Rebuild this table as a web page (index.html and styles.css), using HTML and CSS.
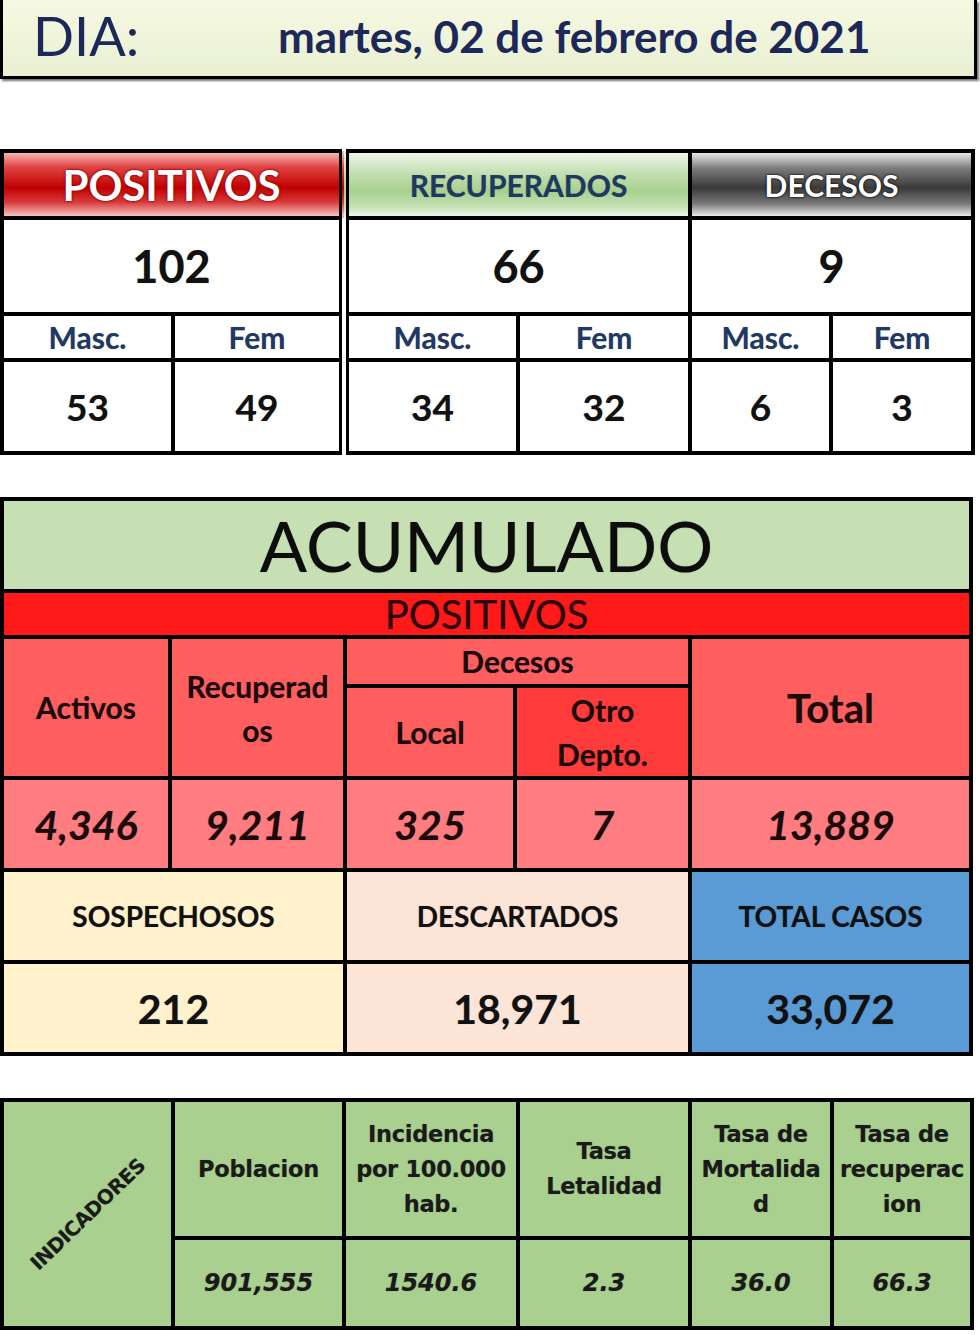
FILE: index.html
```html
<!DOCTYPE html>
<html lang="es">
<head>
<meta charset="utf-8">
<title>Reporte diario COVID-19</title>
<link rel="stylesheet" href="styles.css">
</head>
<body>
<main class="page">
  <header class="day">
    <span class="day-label">DIA:</span>
    <span class="day-date">martes, 02 de febrero de 2021</span>
  </header>

  <table class="daily">
    <colgroup>
      <col class="d1"><col class="d2"><col class="d3"><col class="d4"><col class="d5"><col class="d6">
    </colgroup>
    <tr class="r-head">
      <th colspan="2" class="h-pos sep">POSITIVOS</th>
      <th colspan="2" class="h-rec">RECUPERADOS</th>
      <th colspan="2" class="h-dec">DECESOS</th>
    </tr>
    <tr class="r-big">
      <td colspan="2" class="sep">102</td>
      <td colspan="2">66</td>
      <td colspan="2">9</td>
    </tr>
    <tr class="r-sex">
      <th>Masc.</th><th class="sep">Fem</th>
      <th>Masc.</th><th>Fem</th>
      <th>Masc.</th><th>Fem</th>
    </tr>
    <tr class="r-val">
      <td>53</td><td class="sep">49</td>
      <td>34</td><td>32</td>
      <td>6</td><td>3</td>
    </tr>
  </table>

  <table class="acum">
    <colgroup>
      <col class="a1"><col class="a2"><col class="a3"><col class="a4"><col class="a5">
    </colgroup>
    <tr class="r-title">
      <th colspan="5" class="title">ACUMULADO</th>
    </tr>
    <tr class="r-pos">
      <th colspan="5" class="pos">POSITIVOS</th>
    </tr>
    <tr class="r-h1">
      <th rowspan="2" class="lbl">Activos</th>
      <th rowspan="2" class="lbl two">Recuperad<br>os</th>
      <th colspan="2" class="lbl">Decesos</th>
      <th rowspan="2" class="lbl total">Total</th>
    </tr>
    <tr class="r-h2">
      <th class="lbl">Local</th>
      <th class="lbl otro two">Otro<br>Depto.</th>
    </tr>
    <tr class="r-num">
      <td>4,346</td><td>9,211</td><td>325</td><td>7</td><td>13,889</td>
    </tr>
    <tr class="r-cases">
      <th colspan="2" class="sosp">SOSPECHOSOS</th>
      <th colspan="2" class="desc">DESCARTADOS</th>
      <th class="tot">TOTAL CASOS</th>
    </tr>
    <tr class="r-cnum">
      <td colspan="2" class="sosp">212</td>
      <td colspan="2" class="desc">18,971</td>
      <td class="tot">33,072</td>
    </tr>
  </table>

  <table class="ind">
    <colgroup>
      <col class="i1"><col class="i2"><col class="i3"><col class="i4"><col class="i5"><col class="i6">
    </colgroup>
    <tr class="r-ih">
      <th rowspan="2" class="diag"><span>INDICADORES</span></th>
      <th>Poblacion</th>
      <th>Incidencia<br>por 100.000<br>hab.</th>
      <th>Tasa<br>Letalidad</th>
      <th>Tasa de<br>Mortalida<br>d</th>
      <th>Tasa de<br>recuperac<br>ion</th>
    </tr>
    <tr class="r-iv">
      <td>901,555</td><td>1540.6</td><td>2.3</td><td>36.0</td><td>66.3</td>
    </tr>
  </table>
</main>
</body>
</html>
```

FILE: styles.css
```css
* { box-sizing: border-box; }
html, body { margin: 0; padding: 0; background: #fff; }
body { width: 980px; font-family: Lato, "Open Sans", sans-serif; color: #111; }

.day {
  display: flex;
  align-items: center;
  height: 79px;
  width: 977px;
  border: 3px solid #000;
  border-top: 0;
  background: linear-gradient(#f5f9e2, #e9f0d2);
  box-shadow: 2px 2px 2px rgba(0, 0, 0, .55);
  color: #1c2859;
  padding-bottom: 4px;
}
.day-label { font-size: 54px; margin-left: 30px; width: 245px; line-height: 1; }
.day-date { font-size: 44px; font-weight: 700; line-height: 1; }

table {
  border-collapse: collapse;
  table-layout: fixed;
  width: 973px;
}
th, td {
  border: 4px solid #000;
  padding: 0;
  text-align: center;
  vertical-align: middle;
  font-weight: 700;
  text-shadow: 0 0 1px rgba(0, 0, 0, .35);
}

/* ---------- daily table ---------- */
.daily { margin-top: 70px; background: #fff; }
.daily .d1 { width: 171px; }
.daily .d2 { width: 171px; }
.daily .d3 { width: 174px; }
.daily .d4 { width: 172px; }
.daily .d5 { width: 141px; }
.daily .d6 { width: 142px; }
.daily .sep { border-right: 10px double #000; }
.daily .r-head { height: 67px; }
.daily .r-big { height: 96px; }
.daily .r-sex { height: 46px; }
.daily .r-val { height: 93px; }

.h-pos {
  background: linear-gradient(#f6b5b5 0%, #e04545 22%, #c00000 55%, #d83a3a 78%, #f7c4c4 100%);
  color: #fff;
  font-size: 42px;
}
.daily .h-pos { text-shadow: 0 0 2px #7a0000, 0 0 3px #a00000; }
.h-rec {
  background: linear-gradient(#eef6ea 0%, #c6e0b4 30%, #a9d08e 60%, #c5e0b3 85%, #eef6ea 100%);
  color: #1f3864;
  font-size: 30px;
}
.h-dec {
  background: linear-gradient(#e6e6e6 0%, #7a7a7a 25%, #3a3a3a 55%, #777 80%, #eaeaea 100%);
  color: #fff;
  font-size: 30px;
}
.daily .h-dec { text-shadow: 0 0 2px #000, 0 0 3px #222; }
.r-big td { font-size: 45px; color: #111; }
.r-sex th { font-size: 30px; color: #1f3864; }
.r-val td { font-size: 37px; color: #111; }

/* ---------- accumulated table ---------- */
.acum { margin-top: 42px; }
.acum .a1 { width: 168px; }
.acum .a2 { width: 175px; }
.acum .a3 { width: 170px; }
.acum .a4 { width: 175px; }
.acum .a5 { width: 281px; }
.acum .r-title { height: 92px; }
.acum .r-pos { height: 46px; }
.acum .r-h1 { height: 49px; }
.acum .r-h2 { height: 92px; }
.acum .r-num { height: 92px; }
.acum .r-cases { height: 92px; }
.acum .r-cnum { height: 92px; }

.title {
  background: #c6e0b4;
  font-size: 70px;
  font-weight: 400;
  color: #0d0d0d;
  line-height: 1;
}
.pos {
  background: #ff1a1a;
  font-size: 40px;
  font-weight: 400;
  color: #2b0808;
  line-height: 1;
}
.lbl {
  background: #ff5f5f;
  font-size: 30px;
  color: #1a0a0a;
  line-height: 1.15;
}
.lbl.two { line-height: 44px; }
.lbl.otro { background: #ff3b3b; }
.lbl.total { font-size: 40px; }
.r-num td {
  background: #ff7c80;
  font-size: 41px;
  font-style: italic;
  color: #1a0a0a;
}
.r-cases th { font-size: 28px; color: #111; }
.r-cnum td { font-size: 41px; color: #111; }
.sosp { background: #fff2cc; }
.desc { background: #fce4d6; }
.tot { background: #5b9bd5; }

/* ---------- indicators ---------- */
.ind { margin-top: 42px; background: #a9d08e; }
.ind .i1 { width: 171px; }
.ind .i2 { width: 171px; }
.ind .i3 { width: 174px; }
.ind .i4 { width: 172px; }
.ind .i5 { width: 142px; }
.ind .i6 { width: 140px; }
.ind th, .ind td {
  font-family: "DejaVu Sans", Verdana, sans-serif;
  color: #1a1a1a;
}
.ind .r-ih { height: 138px; }
.ind .r-iv { height: 90px; }
.ind .r-ih th { font-size: 22.5px; line-height: 35px; letter-spacing: -0.3px; }
.ind .r-iv td { font-size: 24px; font-style: italic; }
.diag { overflow: hidden; }
.diag span {
  display: inline-block;
  font-size: 20px;
  letter-spacing: -0.5px;
  transform: rotate(-44deg);
  white-space: nowrap;
}
```
